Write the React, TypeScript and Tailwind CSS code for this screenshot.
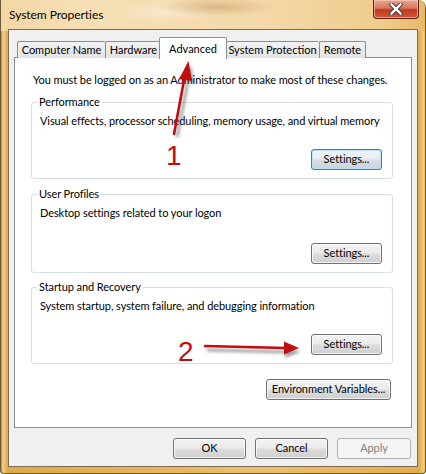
import React from "react";

const font = { fontFamily: "Lato, 'Liberation Sans', sans-serif" };

function Btn({
  children,
  className = "",
  focused = false,
  disabled = false,
}: {
  children: React.ReactNode;
  className?: string;
  focused?: boolean;
  disabled?: boolean;
}) {
  if (disabled) {
    return (
      <div
        className={`h-[21px] flex items-center justify-center rounded-[3px] border border-[#adb2b5] bg-[#f4f4f4] text-[#838383] text-[11px] tracking-[-0.08px] ${className}`}
      >
        {children}
      </div>
    );
  }
  return (
    <div
      className={`h-[21px] flex items-center justify-center rounded-[3px] border ${
        focused ? "border-[#3c7fb1]" : "border-[#707070]"
      } text-[11px] tracking-[-0.08px] text-black relative overflow-hidden ${className}`}
      style={{
        background: focused
          ? "linear-gradient(#f0f4f7 0%, #e8edf1 48%, #d8dde2 52%, #cdd3d8 100%)"
          : "linear-gradient(#f2f2f2 0%, #ebebeb 48%, #dddddd 52%, #cfcfcf 100%)",
        boxShadow: focused
          ? "inset 0 0 0 1px rgba(180,225,250,0.9)"
          : "inset 0 0 0 1px rgba(255,255,255,0.75)",
      }}
    >
      {children}
    </div>
  );
}

function Group({
  label,
  text,
  height,
}: {
  label: string;
  text: string;
  height: string;
}) {
  return (
    <div className={`relative ml-[16px] w-[362px] ${height} border border-[#d5dfe5] rounded-[3px] flex flex-col`}>
      <div className="absolute -top-[8px] left-[5px] px-[2px] bg-white text-[11px] tracking-[-0.08px] leading-[14px] text-black">
        {label}
      </div>
      <div className="mt-[11px] ml-[8px] text-[11px] tracking-[-0.08px] leading-[14px] text-black whitespace-nowrap">
        {text}
      </div>
      <div className="flex justify-end mt-auto mb-[8px] mr-[10px]">
        <Btn className="w-[71px]" focused={label === "Performance"}>
          Settings...
        </Btn>
      </div>
    </div>
  );
}

function Tab({
  label,
  w,
  selected = false,
}: {
  label: string;
  w: string;
  selected?: boolean;
}) {
  if (selected) {
    return (
      <div
        className={`${w} h-[22px] -mx-[2px] relative z-10 border border-b-0 border-[#898c95] bg-white rounded-t-[2px] flex items-start justify-center pt-[3px] text-[11px] tracking-[0px] text-black`}
      >
        {label}
      </div>
    );
  }
  return (
    <div
      className={`${w} h-[17px] mt-[4px] border border-b-0 border-[#898c95] border-r-0 last:border-r rounded-t-[2px] flex items-center justify-center text-[11px] tracking-[0px] text-black`}
      style={{ background: "linear-gradient(#f3f3f3, #e3e3e3)" }}
    >
      {label}
    </div>
  );
}

export default function App() {
  return (
    <div
      className="relative w-[426px] h-[474px] overflow-hidden rounded-tr-[8px] rounded-br-[4px] rounded-bl-[4px] border border-[#6b5a3a] border-t-0 flex flex-col"
      style={{
        ...font,
        background:
          "linear-gradient(90deg, #b98a3c 0px, #f6d48a 2px, #e9b65a 5px, #dfa94e 7px, #e6b65f 40%, #ecc070 60%, #e3ad52 418px, #e8b75e 420px, #f4cf85 423px, #b7853a 426px)",
      }}
    >
      {/* title bar background */}
      <div
        className="absolute inset-x-0 top-0 h-[31px] pointer-events-none"
        style={{
          background:
            "radial-gradient(ellipse 60px 9px at 215px 7px, rgba(170,120,60,0.35), transparent), radial-gradient(ellipse 50px 12px at 165px 12px, rgba(255,255,255,0.35), transparent), linear-gradient(90deg, #f3d7a4 0%, #f6dfb6 20%, #f4d9a9 60%, #f0cc8c 90%, #e9b868 100%)",
        }}
      />
      {/* Title bar */}
      <div className="relative h-[29px] flex items-start shrink-0">
        <div className="ml-[8px] mt-[8px] text-[12px] leading-[14px] text-black tracking-[-0.05px]">
          System Properties
        </div>
        <div
          className="absolute left-[372px] top-0 w-[46px] h-[19px] rounded-b-[4px] border border-[#5a2216] border-t-0 flex items-center justify-center"
          style={{
            background:
              "linear-gradient(#e8a593 0%, #d9755c 45%, #c4391b 55%, #d0573a 100%)",
            boxShadow: "inset 0 0 0 1px rgba(255,220,200,0.55)",
          }}
        >
          <svg width="14" height="12" viewBox="0 0 14 12">
            <path
              d="M2.5 1.5 L11.5 10.5 M11.5 1.5 L2.5 10.5"
              stroke="#3a3a3a"
              strokeWidth="4.2"
              strokeLinecap="square"
              fill="none"
            />
            <path
              d="M2.5 1.5 L11.5 10.5 M11.5 1.5 L2.5 10.5"
              stroke="#ffffff"
              strokeWidth="2.4"
              strokeLinecap="square"
              fill="none"
            />
          </svg>
        </div>
      </div>

      {/* Client area */}
      <div className="relative mx-[7px] h-[438px] border border-[#7b6c56] bg-[#f0f0f0] flex flex-col">
        {/* Tabs */}
        <div className="flex items-start pl-[8px] mt-[7px] h-[21px] relative z-10">
          <Tab label="Computer Name" w="w-[88px]" />
          <Tab label="Hardware" w="w-[56px]" />
          <Tab label="Advanced" w="w-[68px]" selected />
          <Tab label="System Protection" w="w-[94px]" />
          <Tab label="Remote" w="w-[47px]" />
        </div>
        {/* Panel */}
        <div className="ml-[5px] w-[398px] h-[371px] -mt-px border border-[#898c95] bg-white flex flex-col">
          <div className="mt-[15px] ml-[18px] text-[11px] tracking-[-0.08px] leading-[14px] text-black whitespace-nowrap">
            You must be logged on as an Administrator to make most of these changes.
          </div>
          <div className="mt-[15px]">
            <Group
              label="Performance"
              text="Visual effects, processor scheduling, memory usage, and virtual memory"
              height="h-[77px]"
            />
          </div>
          <div className="mt-[15px]">
            <Group label="User Profiles" text="Desktop settings related to your logon" height="h-[79px]" />
          </div>
          <div className="mt-[14px]">
            <Group
              label="Startup and Recovery"
              text="System startup, system failure, and debugging information"
              height="h-[77px]"
            />
          </div>
          <div className="flex justify-end mt-[15px] mr-[20px]">
            <Btn className="w-[125px]">Environment Variables...</Btn>
          </div>
        </div>
        {/* Bottom buttons */}
        <div className="flex justify-end gap-[9px] mt-[10px] mr-[6px]">
          <Btn className="w-[73px]">OK</Btn>
          <Btn className="w-[73px]">Cancel</Btn>
          <Btn className="w-[74px]" disabled>
            Apply
          </Btn>
        </div>
      </div>

      {/* Annotation arrows */}
      <svg
        className="absolute inset-0 pointer-events-none z-20"
        width="426"
        height="474"
        viewBox="0 0 426 474"
      >
        <defs>
          <filter id="sh" x="-50%" y="-50%" width="200%" height="200%">
            <feGaussianBlur stdDeviation="1.6" />
          </filter>
        </defs>
        <g opacity="0.45" filter="url(#sh)" transform="translate(3,3)">
          <path d="M173 134 L184 78" stroke="#333" strokeWidth="3" fill="none" />
          <path d="M187 62 L178 78 L190 80 Z" fill="#333" />
        </g>
        <path d="M173 134 L184 75" stroke="#c00d0d" strokeWidth="2.6" strokeLinecap="round" fill="none" />
        <path d="M187.5 61 L178 79 L191 81 Z" fill="#c00d0d" />
        <g opacity="0.45" filter="url(#sh)" transform="translate(2,4)">
          <path d="M204 346 L284 348" stroke="#333" strokeWidth="3" fill="none" />
          <path d="M297 348 L282 342 L282 354 Z" fill="#333" />
        </g>
        <path d="M204 346 L285 348" stroke="#c00d0d" strokeWidth="2.6" strokeLinecap="round" fill="none" />
        <path d="M298 348 L283 341.5 L283 354.5 Z" fill="#c00d0d" />
      </svg>
      <div
        className="absolute left-[165px] top-[142px] z-20 text-[28px] leading-[28px] text-[#c00d0d]"
        style={{ fontFamily: "'Liberation Sans', sans-serif" }}
      >
        1
      </div>
      <div
        className="absolute left-[177px] top-[338px] z-20 text-[28px] leading-[28px] text-[#c00d0d]"
        style={{ fontFamily: "'Liberation Sans', sans-serif" }}
      >
        2
      </div>
    </div>
  );
}
